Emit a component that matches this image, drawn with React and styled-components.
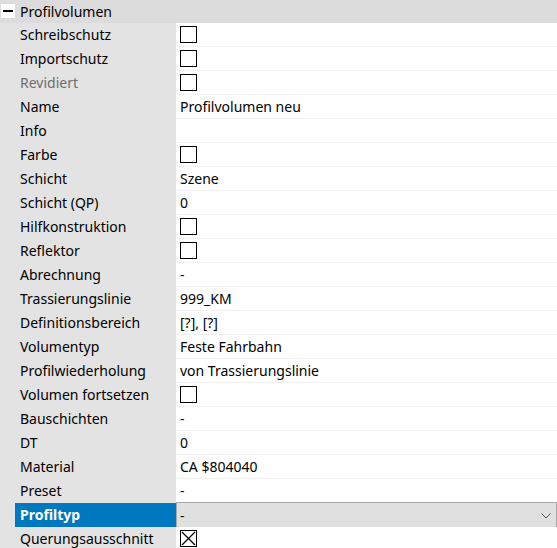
import React from 'react'
import styled, { createGlobalStyle } from 'styled-components'

const Global = createGlobalStyle`
  html, body {
    margin: 0;
    padding: 0;
    background: #e3e3e3;
    overflow: hidden;
  }
  body {
    font-family: "Noto Sans", "Open Sans", sans-serif;
    font-size: 14px;
    color: #000;
  }
`

const Grid = styled.div`
  width: 557px;
  display: flex;
  flex-direction: column;
`

const Header = styled.div`
  height: 23px;
  display: flex;
  align-items: center;
  background: #dcdcdc;
  gap: 5px;
  padding-left: 1px;
  padding-bottom: 1px;
  box-sizing: border-box;
`

const Toggle = styled.span`
  width: 14px;
  height: 14px;
  background: #fff;
  display: flex;
  align-items: center;
  justify-content: center;

  &::before {
    content: '';
    width: 10px;
    height: 2px;
    background: #000;
  }
`

const Row = styled.div`
  display: flex;
  height: 24px;
  padding-left: 15px;
`

const Label = styled.div`
  width: 156px;
  padding: 0 0 2px 5px;
  display: flex;
  align-items: center;
  background: ${p => (p.$selected ? '#0078c0' : '#e3e3e3')};
  color: ${p => (p.$selected ? '#fff' : p.$muted ? '#6d6d6d' : '#000')};
  font-weight: ${p => (p.$selected ? 700 : 400)};
  white-space: nowrap;
`

const Value = styled.div`
  flex: 1;
  display: flex;
  align-items: center;
  padding: 0 0 1px 4px;
  background: #fff;
  border-bottom: 1px solid #f0f0f0;
  white-space: nowrap;
`

const Combo = styled.div`
  flex: 1;
  display: flex;
  align-items: center;
  justify-content: space-between;
  padding: 0 5px 0 3px;
  background: #e0e0e0;
  border: 1px solid #a8a8a8;
  height: 27px;
  box-sizing: border-box;
  margin-top: -1px;
`

const Box = styled.span`
  width: 17px;
  height: 17px;
  box-sizing: border-box;
  border: 1px solid #000;
  background: #fff;
  display: inline-block;
  position: relative;
`

const Cross = styled.svg`
  position: absolute;
  inset: 0;
`

const Check = ({ on }) => (
  <Box>
    {on && (
      <Cross width="15" height="15" viewBox="0 0 15 15">
        <path d="M1 1L14 14M14 1L1 14" stroke="#000" strokeWidth="1.3" />
      </Cross>
    )}
  </Box>
)

const rows = [
  ['Schreibschutz', 'check'],
  ['Importschutz', 'check'],
  ['Revidiert', 'check', true],
  ['Name', 'Profilvolumen neu'],
  ['Info', ''],
  ['Farbe', 'check'],
  ['Schicht', 'Szene'],
  ['Schicht (QP)', '0'],
  ['Hilfkonstruktion', 'check'],
  ['Reflektor', 'check'],
  ['Abrechnung', '-'],
  ['Trassierungslinie', '999_KM'],
  ['Definitionsbereich', '[?], [?]'],
  ['Volumentyp', 'Feste Fahrbahn'],
  ['Profilwiederholung', 'von Trassierungslinie'],
  ['Volumen fortsetzen', 'check'],
  ['Bauschichten', '-'],
  ['DT', '0'],
  ['Material', 'CA $804040'],
  ['Preset', '-'],
  ['Profiltyp', 'combo'],
  ['Querungsausschnitt', 'checked'],
]

export default function App() {
  return (
    <>
      <Global />
      <Grid>
        <Header>
          <Toggle />
          <span>Profilvolumen</span>
        </Header>
        {rows.map(([label, value, muted]) => (
          <Row key={label}>
            <Label $muted={muted} $selected={value === 'combo'}>{label}</Label>
            {value === 'combo' ? (
              <Combo>
                <span>-</span>
                <svg width="10" height="6" viewBox="0 0 10 6">
                  <path d="M0.5 0.5L5 5L9.5 0.5" fill="none" stroke="#555" strokeWidth="1" />
                </svg>
              </Combo>
            ) : (
              <Value>
                {value === 'check' || value === 'checked' ? <Check on={value === 'checked'} /> : value}
              </Value>
            )}
          </Row>
        ))}
      </Grid>
    </>
  )
}
